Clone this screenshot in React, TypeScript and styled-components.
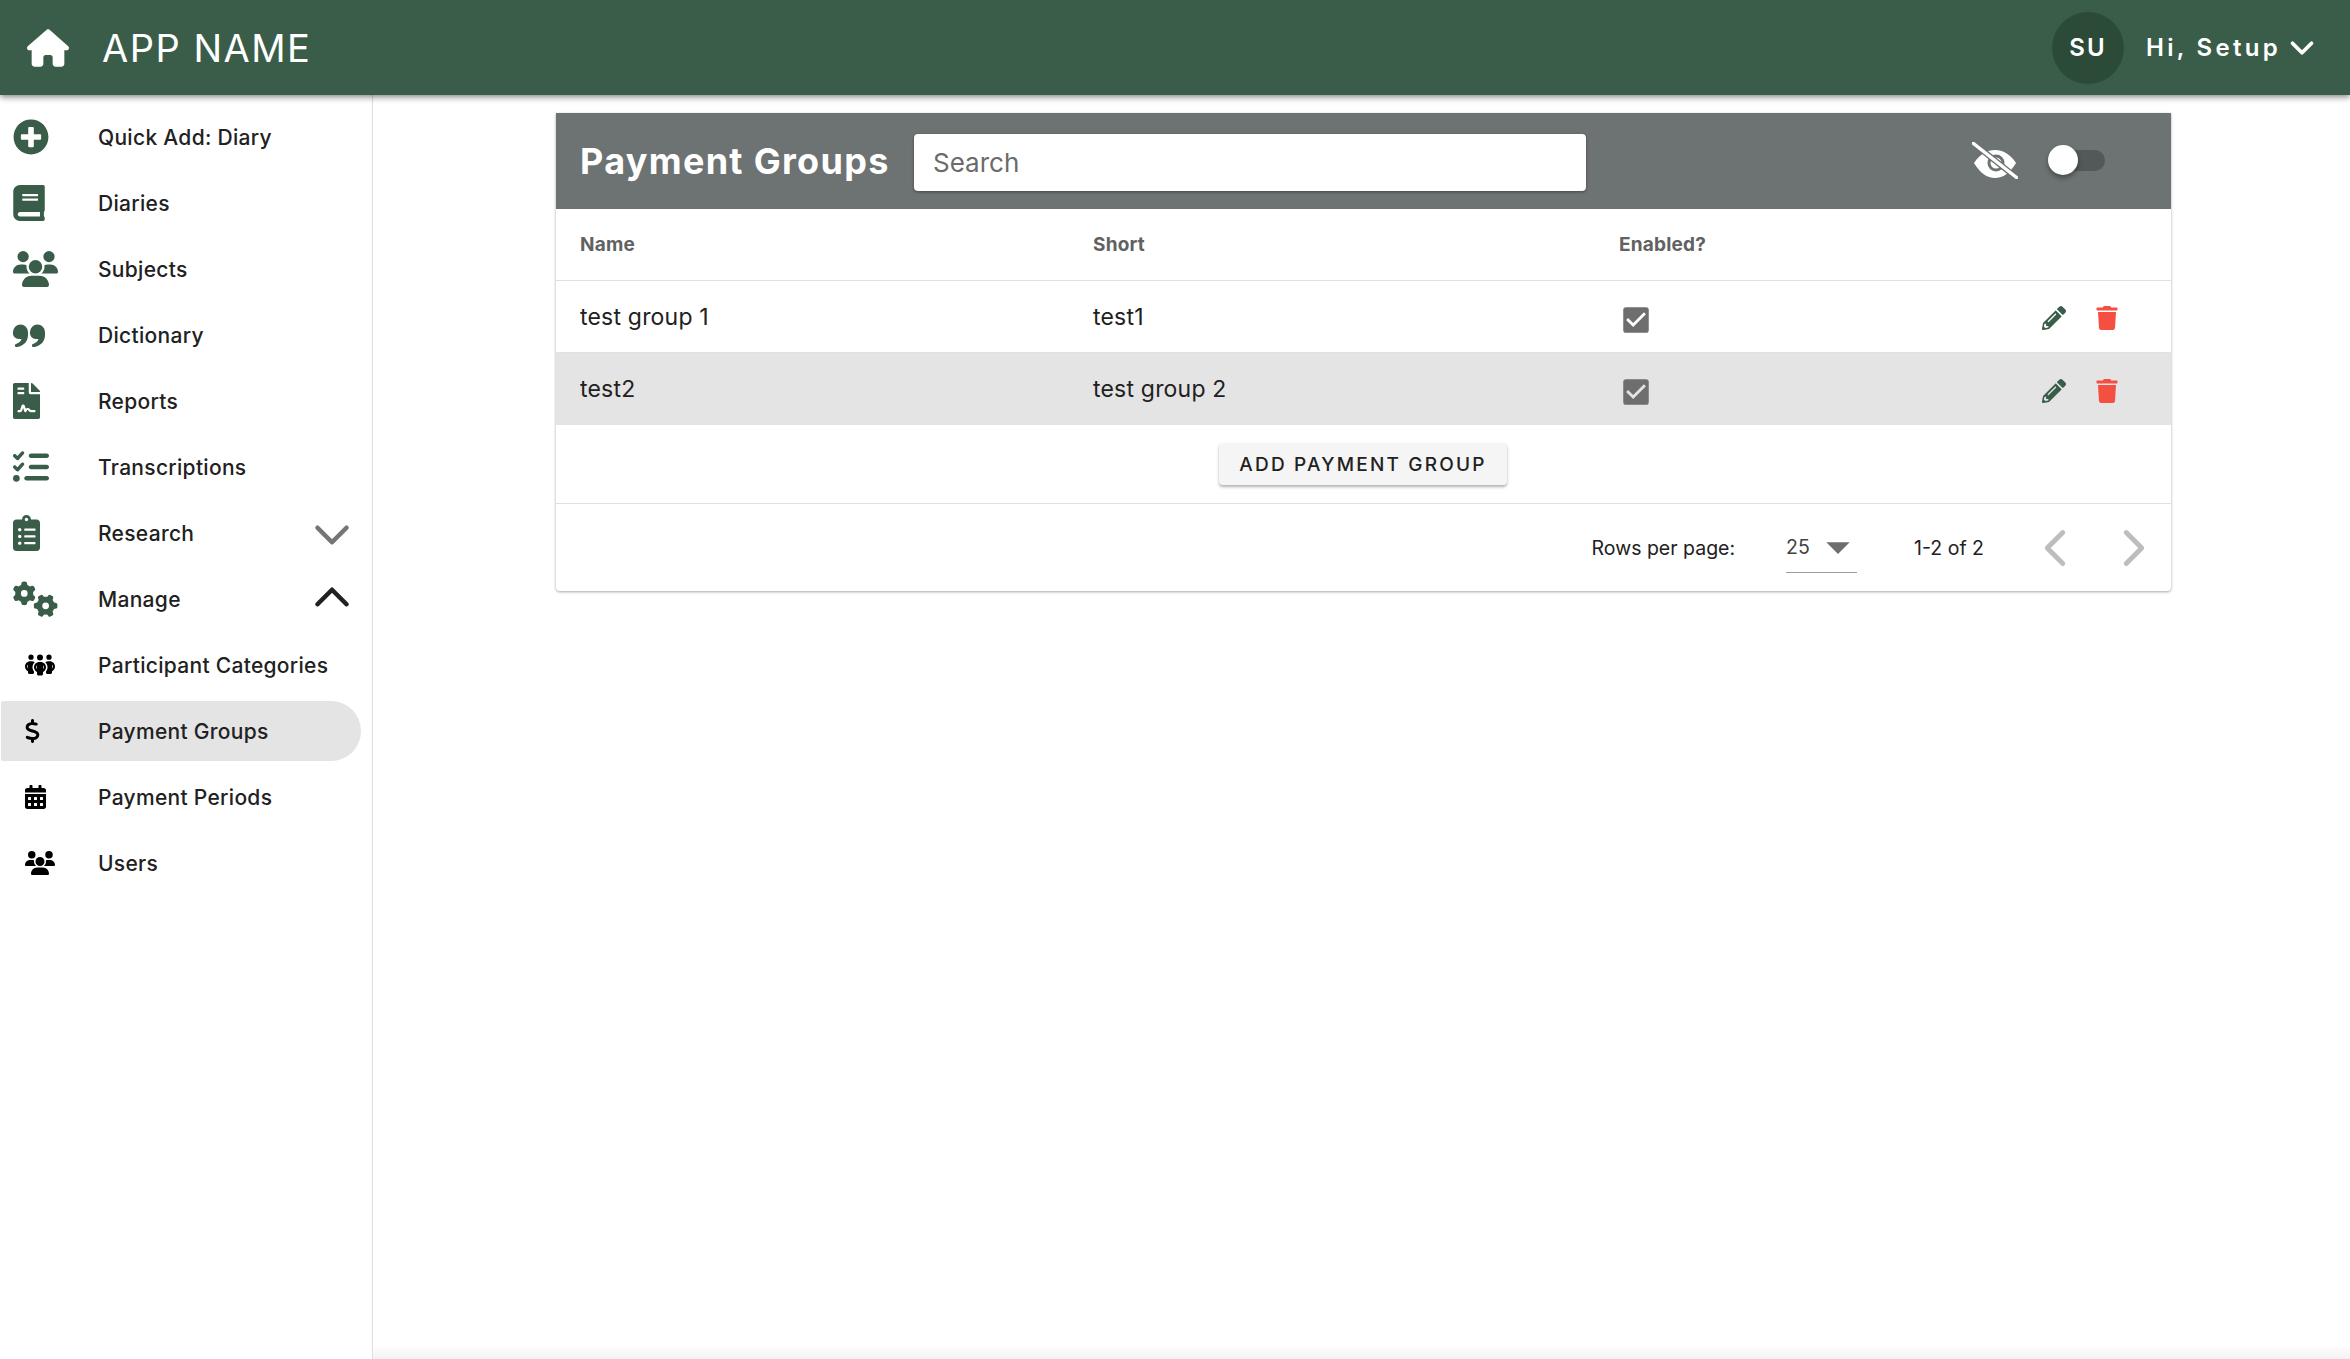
import React from 'react'
import styled, { createGlobalStyle } from 'styled-components'
import { FaPlusCircle, FaBook, FaFileContract, FaClipboardList, FaCalendarAlt, FaPencilAlt, FaTrash } from 'react-icons/fa'
import { FaHouse, FaUsers, FaListCheck, FaGears, FaPeopleGroup, FaDollarSign } from 'react-icons/fa6'
import { MdCheckBox, MdArrowDropDown } from 'react-icons/md'
import { ChevronDown, ChevronUp, ChevronLeft, ChevronRight } from 'lucide-react'

const GREEN = '#395d48'
const FONT = `Inter, "Open Sans", "Liberation Sans", sans-serif`

const GlobalStyle = createGlobalStyle`
	html, body {
		margin: 0;
		padding: 0;
		background: #fff;
		font-family: ${FONT};
	}
`

const Page = styled.div`
	width: 2350px;
	height: 1359px;
	display: flex;
	flex-direction: column;
	overflow: hidden;
`
const TopBar = styled.header`
	height: 95px;
	flex: none;
	background: ${GREEN};
	box-shadow: 0 2px 4px -1px rgba(0, 0, 0, 0.25), 0 4px 5px rgba(0, 0, 0, 0.16), 0 1px 10px rgba(0, 0, 0, 0.14);
	display: flex;
	align-items: center;
	color: #fff;
	position: relative;
	z-index: 2;
	padding-left: 27px;
`
const AppTitle = styled.div`
	font-size: 38px;
	letter-spacing: 1.5px;
	margin-left: 33px;
	flex: 1;
`
const Avatar = styled.div`
	width: 72px;
	height: 72px;
	border-radius: 50%;
	background: #2c4a38;
	display: flex;
	align-items: center;
	justify-content: center;
	font-size: 24px;
	font-weight: 600;
	letter-spacing: 2px;
`
const Greeting = styled.div`
	width: 204px;
	font-size: 24px;
	font-weight: 600;
	letter-spacing: 3.3px;
	margin-left: 22px;
	display: flex;
	align-items: center;
	white-space: nowrap;
	svg {
		flex: none;
		margin-left: 2px;
	}
`
const Body = styled.div`
	flex: 1;
	display: flex;
	min-height: 0;
`
const Sidebar = styled.nav`
	width: 371px;
	flex: none;
	border-right: 1px solid #dedede;
	padding: 12px 0 0 1px;
`
const NavItem = styled.div<{ $active?: boolean }>`
	width: 360px;
	height: 60px;
	margin-bottom: 6px;
	border-radius: 2px 30px 30px 2px;
	background: ${p => (p.$active ? '#e4e4e4' : 'transparent')};
	display: flex;
	align-items: center;
	color: #212121;
	font-size: 21px;
	letter-spacing: 0.3px;
	font-weight: 500;
`
const NavIcon = styled.span<{ $sub?: boolean; $w: number; $h: number }>`
	width: 97px;
	flex: none;
	padding-left: ${p => (p.$sub ? '24px' : '12px')};
	box-sizing: border-box;
	display: flex;
	align-items: center;
	color: ${p => (p.$sub ? '#000' : GREEN)};
	svg {
		width: ${p => p.$w}px;
		height: ${p => p.$h}px;
	}
`
const NavLabel = styled.span`
	flex: 1;
`
const NavChevron = styled.span<{ $open?: boolean }>`
	display: flex;
	margin-top: ${p => (p.$open ? '-4px' : '4px')};
	color: ${p => (p.$open ? '#212121' : '#757575')};
`
const Main = styled.main`
	flex: 1;
	padding: 18px 179px 0 183px;
	min-width: 0;
	position: relative;
	&::after {
		content: '';
		position: absolute;
		left: 0;
		right: 0;
		bottom: 0;
		height: 14px;
		background: linear-gradient(rgba(0, 0, 0, 0), rgba(0, 0, 0, 0.05));
	}
`
const Card = styled.section`
	background: #fff;
	border-radius: 0 0 4px 4px;
	box-shadow: 0 1px 3px rgba(0, 0, 0, 0.35);
`
const CardHead = styled.div`
	height: 96px;
	background: #6d7272;
	display: flex;
	align-items: center;
	padding: 0 66px 0 24px;
	color: #fff;
`
const CardTitle = styled.h1`
	margin: 0;
	font-size: 36px;
	letter-spacing: 1.3px;
	font-weight: 700;
	width: 334px;
	flex: none;
	white-space: nowrap;
`
const Search = styled.input`
	width: 672px;
	height: 57px;
	margin-top: 3px;
	box-sizing: border-box;
	border: none;
	outline: none;
	border-radius: 4px;
	padding: 0 19px;
	font-family: ${FONT};
	font-size: 26px;
	box-shadow: 0 1px 3px rgba(0, 0, 0, 0.4);
	&::placeholder {
		color: #6b6b6b;
		opacity: 1;
	}
`
const HeadTools = styled.div`
	margin-left: auto;
	display: flex;
	align-items: center;
	gap: 30px;
	margin-bottom: 2px;
`
const SwitchTrack = styled.div`
	width: 57px;
	height: 21px;
	border-radius: 11px;
	background: #535858;
	position: relative;
`
const SwitchThumb = styled.div`
	position: absolute;
	left: 0;
	top: -5px;
	width: 30px;
	height: 30px;
	border-radius: 50%;
	background: #fff;
	box-shadow: 0 3px 5px rgba(0, 0, 0, 0.35);
`
const Row = styled.div<{ $head?: boolean; $shaded?: boolean }>`
	height: ${p => (p.$shaded ? '72px' : '71px')};
	display: grid;
	grid-template-columns: 513px 526px 1fr 129px;
	align-items: center;
	padding-left: 24px;
	background: ${p => (p.$shaded ? '#e4e4e4' : 'transparent')};
	border-bottom: ${p => (p.$shaded ? 'none' : '1px solid #e0e0e0')};
	color: ${p => (p.$head ? '#616161' : '#212121')};
	font-size: ${p => (p.$head ? '19px' : '23px')};
	letter-spacing: 0.2px;
	font-weight: ${p => (p.$head ? 700 : 400)};
`
const CheckCell = styled.div`
	display: flex;
	padding-top: 6px;
	color: #6e6e6e;
`
const Actions = styled.div`
	display: flex;
	align-items: center;
	gap: 29px;
	padding-top: 3px;
`
const AddRow = styled.div`
	height: 79px;
	display: flex;
	justify-content: center;
	align-items: flex-start;
	padding: 18px 1px 0 0;
	box-sizing: border-box;
	border-bottom: 1px solid #e0e0e0;
`
const AddButton = styled.button`
	width: 288px;
	height: 42px;
	padding: 0;
	border: none;
	border-radius: 4px;
	background: #f5f5f5;
	color: #212121;
	font-family: ${FONT};
	font-size: 19px;
	font-weight: 500;
	letter-spacing: 2.2px;
	box-shadow: 0 2px 3px rgba(0, 0, 0, 0.3);
`
const Pager = styled.div`
	height: 87px;
	display: flex;
	align-items: center;
	justify-content: flex-end;
	color: #212121;
	font-size: 19.5px;
	padding-right: 6px;
`
const PerPage = styled.div`
	margin-left: 51px;
	width: 71px;
	height: 50px;
	box-sizing: border-box;
	border-bottom: 1px solid #9e9e9e;
	display: flex;
	align-items: center;
	justify-content: space-between;
	color: #424242;
	svg {
		flex: none;
		margin-right: -9px;
	}
`
const RangeText = styled.span`
	margin-left: 57px;
	margin-right: 40px;
`
const PageArrows = styled.div`
	display: flex;
	gap: 17px;
	color: #bdbdbd;
`

const QuoteIcon = () => (
	<svg viewBox="0 0 32 23" fill="currentColor">
		<path d="M0 8a7.5 7.5 0 0 1 15 0v3c0 6-4 11-11 12a1.5 1.5 0 0 1-1-3c3-1 5-3 5.5-5H6a6 6 0 0 1-6-7Z" />
		<path d="M17 8a7.5 7.5 0 0 1 15 0v3c0 6-4 11-11 12a1.5 1.5 0 0 1-1-3c3-1 5-3 5.5-5H23a6 6 0 0 1-6-7Z" />
	</svg>
)

const EyeOffIcon = () => (
	<svg width="46" height="37" viewBox="0 0 46 37">
		<path d="M2 21C8 12 15 8 23 8s15 4 21 13c-6 10-13 15-21 15S8 31 2 21Z" fill="#fff" />
		<circle cx="24" cy="21" r="7" fill="none" stroke="#6d7272" strokeWidth="3" />
		<path d="M1 1 45 36" stroke="#6d7272" strokeWidth="6" />
		<path d="M1.5 1.5 44.5 35.5" stroke="#fff" strokeWidth="3.5" strokeLinecap="round" />
	</svg>
)

type Item = { label: string; icon: React.ReactNode; w: number; h: number; sub?: boolean; active?: boolean; chevron?: 'open' | 'closed' }

const items: Item[] = [
	{ label: 'Quick Add: Diary', icon: <FaPlusCircle />, w: 36, h: 36 },
	{ label: 'Diaries', icon: <FaBook />, w: 32, h: 36 },
	{ label: 'Subjects', icon: <FaUsers />, w: 45, h: 36 },
	{ label: 'Dictionary', icon: <QuoteIcon />, w: 32, h: 23 },
	{ label: 'Reports', icon: <FaFileContract />, w: 27, h: 36 },
	{ label: 'Transcriptions', icon: <FaListCheck />, w: 36, h: 36 },
	{ label: 'Research', icon: <FaClipboardList />, w: 27, h: 36, chevron: 'closed' },
	{ label: 'Manage', icon: <FaGears />, w: 45, h: 36, chevron: 'open' },
	{ label: 'Participant Categories', icon: <FaPeopleGroup />, w: 30, h: 24, sub: true },
	{ label: 'Payment Groups', icon: <FaDollarSign />, w: 15, h: 24, sub: true, active: true },
	{ label: 'Payment Periods', icon: <FaCalendarAlt />, w: 21, h: 24, sub: true },
	{ label: 'Users', icon: <FaUsers />, w: 30, h: 24, sub: true },
]

const rows = [
	{ name: 'test group 1', short: 'test1' },
	{ name: 'test2', short: 'test group 2' },
]

export default function App() {
	return (
		<Page>
			<GlobalStyle />
			<TopBar>
				<FaHouse size={42} />
				<AppTitle>APP NAME</AppTitle>
				<Avatar>SU</Avatar>
				<Greeting>Hi, Setup <ChevronDown size={38} strokeWidth={2.4} /></Greeting>
			</TopBar>
			<Body>
				<Sidebar>
					{items.map(item => (
						<NavItem key={item.label} $active={item.active}>
							<NavIcon $sub={item.sub} $w={item.w} $h={item.h}>{item.icon}</NavIcon>
							<NavLabel>{item.label}</NavLabel>
							{item.chevron && (
								<NavChevron $open={item.chevron === 'open'}>
									{item.chevron === 'open' ? <ChevronUp size={58} strokeWidth={1.9} /> : <ChevronDown size={58} strokeWidth={1.9} />}
								</NavChevron>
							)}
						</NavItem>
					))}
				</Sidebar>
				<Main>
					<Card>
						<CardHead>
							<CardTitle>Payment Groups</CardTitle>
							<Search placeholder="Search" />
							<HeadTools>
								<EyeOffIcon />
								<SwitchTrack><SwitchThumb /></SwitchTrack>
							</HeadTools>
						</CardHead>
						<Row $head>
							<div>Name</div>
							<div>Short</div>
							<div>Enabled?</div>
							<div />
						</Row>
						{rows.map((row, i) => (
							<Row key={row.name} $shaded={i === 1}>
								<div>{row.name}</div>
								<div>{row.short}</div>
								<CheckCell><MdCheckBox size={34} /></CheckCell>
								<Actions>
									<FaPencilAlt size={24} color={GREEN} />
									<FaTrash size={24} color="#f44f40" />
								</Actions>
							</Row>
						))}
						<AddRow><AddButton>ADD PAYMENT GROUP</AddButton></AddRow>
						<Pager>
							<span>Rows per page:</span>
							<PerPage>25 <MdArrowDropDown size={56} color="#6e6e6e" /></PerPage>
							<RangeText>1-2 of 2</RangeText>
							<PageArrows>
								<ChevronLeft size={62} strokeWidth={1.9} />
								<ChevronRight size={62} strokeWidth={1.9} />
							</PageArrows>
						</Pager>
					</Card>
				</Main>
			</Body>
		</Page>
	)
}
